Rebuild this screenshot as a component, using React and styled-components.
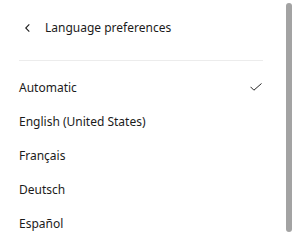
import React from 'react';
import styled, { createGlobalStyle } from 'styled-components';

const GlobalStyle = createGlobalStyle`
  *, *::before, *::after {
    box-sizing: border-box;
  }
  html, body {
    margin: 0;
    padding: 0;
    background: #ffffff;
  }
  body {
    font-family: "Noto Sans", "Open Sans", sans-serif;
    color: #1b1b1b;
  }
`;

const Panel = styled.div`
  display: flex;
  width: 294px;
  height: 241px;
  background: #ffffff;
  overflow: hidden;
`;

const Content = styled.div`
  flex: 1;
  padding: 0 19px;
`;

const Header = styled.div`
  display: flex;
  align-items: center;
  height: 56px;
  padding-left: 6px;
`;

const BackButton = styled.button`
  display: flex;
  align-items: center;
  justify-content: center;
  width: 5px;
  height: 8px;
  padding: 0;
  margin-right: 15px;
  border: none;
  background: none;
  color: #1b1b1b;
`;

const Title = styled.div`
  font-size: 12px;
  line-height: 20px;
`;

const Divider = styled.div`
  height: 1px;
  margin-top: 4px;
  margin-bottom: 9px;
  background: #ececec;
`;

const List = styled.ul`
  list-style: none;
  margin: 0;
  padding: 0;
`;

const Item = styled.li`
  display: flex;
  align-items: center;
  justify-content: space-between;
  height: 34px;
  font-size: 12px;
`;

const Check = styled.svg`
  margin-right: 1px;
  color: #262626;
`;

const Track = styled.div`
  width: 12px;
  padding: 3px 2px 9px 4px;
`;

const Thumb = styled.div`
  width: 6px;
  height: 100%;
  border-radius: 3px;
  background: #a3a3a3;
`;

const languages = [
  { name: 'Automatic', selected: true },
  { name: 'English (United States)' },
  { name: 'Français' },
  { name: 'Deutsch' },
  { name: 'Español' },
];

const App = () => {
  return (
    <>
      <GlobalStyle />
      <Panel>
        <Content>
          <Header>
            <BackButton aria-label="Back">
              <svg width="5" height="8" viewBox="0 0 5 8">
                <path d="M4.3 0.4 L0.7 4 L4.3 7.6" fill="none" stroke="currentColor" strokeWidth="1.1" />
              </svg>
            </BackButton>
            <Title>Language preferences</Title>
          </Header>
          <Divider />
          <List>
            {languages.map((lang) => (
              <Item key={lang.name}>
                <span>{lang.name}</span>
                {lang.selected && (
                  <Check width="12" height="8" viewBox="0 0 12 8">
                    <path d="M0.5 3.8 L3.9 7.2 L11.5 0.5" fill="none" stroke="currentColor" strokeWidth="1" />
                  </Check>
                )}
              </Item>
            ))}
          </List>
        </Content>
        <Track>
          <Thumb />
        </Track>
      </Panel>
    </>
  );
};

export default App;
